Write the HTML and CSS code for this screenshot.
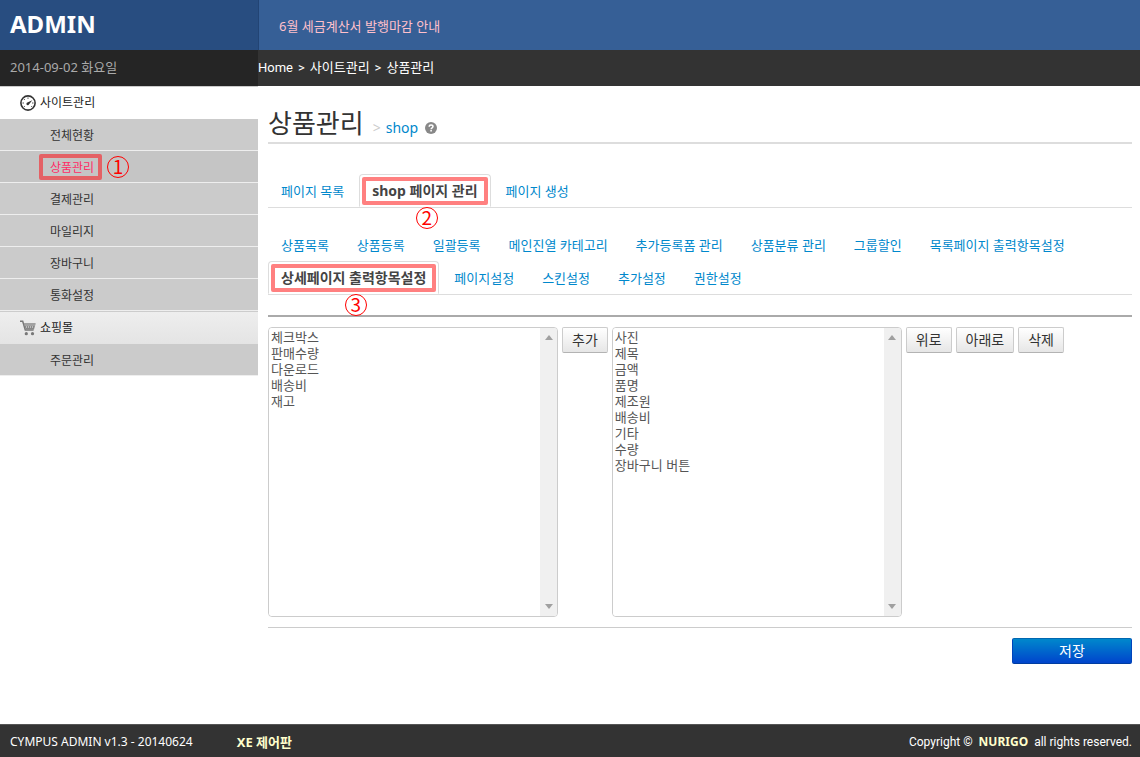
FILE: index.html
```html
<!DOCTYPE html>
<html lang="ko">
<head>
<meta charset="utf-8">
<title>ADMIN</title>
<link rel="stylesheet" href="styles.css">
</head>
<body>
<header class="top">
  <h1 class="brand">ADMIN</h1>
  <a class="notice" href="#">6월 세금계산서 발행마감 안내</a>
</header>
<div class="subbar">
  <div class="date">2014-09-02 화요일</div>
  <nav class="crumbs" aria-label="현재 위치"><a href="#">Home</a><span>&gt;</span><a href="#">사이트관리</a><span>&gt;</span><a href="#">상품관리</a></nav>
</div>
<div class="body">
  <nav class="side">
    <h2 class="side-head">
      <svg class="side-icon" viewBox="0 0 16 16" aria-hidden="true"><circle cx="8" cy="8" r="7.1" fill="#fff" stroke="#333" stroke-width="1.6"/><path d="M8 2.4v1.5M3.9 4l1 1M2.5 8H4M3.9 12l.9-.9M12.1 12l-.9-.9M13.5 8H12" stroke="#555" fill="none"/><path d="M12.3 5.2 8.9 9.4a1.3 1.3 0 1 1-1.5-1.8z" fill="#333"/></svg>
      사이트관리
    </h2>
    <ul class="side-list">
      <li><a href="#">전체현황</a></li>
      <li class="current"><a href="#">상품관리<span class="mark mark-side"></span></a><span class="step step-side">1</span></li>
      <li><a href="#">결제관리</a></li>
      <li><a href="#">마일리지</a></li>
      <li><a href="#">장바구니</a></li>
      <li><a href="#">통화설정</a></li>
    </ul>
    <h2 class="side-head side-head-alt">
      <svg class="side-icon" viewBox="0 0 16 16" aria-hidden="true"><path d="M0 1.2h2.7l2.6 8.9h8.3" fill="none" stroke="#777" stroke-width="1.5"/><path d="M4 3.2h11.7L14 9.4H5.6z" fill="#888"/><path d="M5.5 5h9M6 7h8" stroke="#eee" stroke-width="1" stroke-dasharray="1 1"/><circle cx="6.3" cy="13.7" r="1.6" fill="#777"/><circle cx="12.5" cy="13.7" r="1.6" fill="#777"/></svg>
      쇼핑몰
    </h2>
    <ul class="side-list">
      <li><a href="#">주문관리</a></li>
    </ul>
  </nav>
  <main class="main">
    <div class="title">
      <h2>상품관리</h2><span class="sep">&gt;</span><a href="#">shop</a>
      <svg class="help" viewBox="0 0 12 12" role="img" aria-label="도움말"><circle cx="6" cy="6" r="6" fill="#888"/><path d="M4.2 4.7C4.2 2.4 8 2.5 8 4.6 8 6 6.1 5.8 6.1 7.3" fill="none" stroke="#fff" stroke-width="1.5"/><path d="M5.3 8.1h1.6v1.5H5.3z" fill="#fff"/></svg>
    </div>
    <ul class="tabs">
      <li><a href="#">페이지 목록</a></li>
      <li class="active"><a href="#">shop 페이지 관리</a><span class="mark"></span><span class="step step-tab">2</span></li>
      <li><a href="#">페이지 생성</a></li>
    </ul>
    <ul class="tabs">
      <li><a href="#">상품목록</a></li>
      <li><a href="#">상품등록</a></li>
      <li><a href="#">일괄등록</a></li>
      <li><a href="#">메인진열 카테고리</a></li>
      <li><a href="#">추가등록폼 관리</a></li>
      <li><a href="#">상품분류 관리</a></li>
      <li><a href="#">그룹할인</a></li>
      <li><a href="#">목록페이지 출력항목설정</a></li>
      <li class="active"><a href="#">상세페이지 출력항목설정</a><span class="mark"></span><span class="step step-tab">3</span></li>
      <li><a href="#">페이지설정</a></li>
      <li><a href="#">스킨설정</a></li>
      <li><a href="#">추가설정</a></li>
      <li><a href="#">권한설정</a></li>
    </ul>
    <form class="form">
      <div class="pickers">
        <div class="listbox">
          <select multiple size="18" aria-label="추가할 항목">
            <option>체크박스</option><option>판매수량</option><option>다운로드</option><option>배송비</option><option>재고</option>
          </select>
          <div class="bar" aria-hidden="true"><i class="up"></i><i class="down"></i></div>
        </div>
        <button class="btn" type="button">추가</button>
        <div class="listbox">
          <select multiple size="18" aria-label="출력 항목">
            <option>사진</option><option>제목</option><option>금액</option><option>품명</option><option>제조원</option><option>배송비</option><option>기타</option><option>수량</option><option>장바구니 버튼</option>
          </select>
          <div class="bar" aria-hidden="true"><i class="up"></i><i class="down"></i></div>
        </div>
        <button class="btn" type="button">위로</button>
        <button class="btn" type="button">아래로</button>
        <button class="btn" type="button">삭제</button>
      </div>
      <div class="actions"><button class="save" type="submit">저장</button></div>
    </form>
  </main>
</div>
<footer class="foot">
  <span>CYMPUS ADMIN v1.3 - 20140624</span>
  <a href="#">XE 제어판</a>
  <span class="copy">Copyright © <a href="#">NURIGO</a> all rights reserved.</span>
</footer>
</body>
</html>
```
FILE: styles.css
```css
* { box-sizing: border-box; }
body {
  margin: 0;
  min-height: 100vh;
  display: flex;
  flex-direction: column;
  background: #fff;
  color: #333;
  font: 13px/20px "Noto Sans", "Noto Sans CJK KR", sans-serif;
}
a { color: inherit; text-decoration: none; }
h1, h2, ul { margin: 0; padding: 0; font-weight: 400; }
ul { list-style: none; }

.top { display: flex; height: 50px; background: #365f96; }
.brand {
  width: 259px;
  padding-left: 10px;
  border-right: 1px solid #224474;
  background: #284d80;
  color: #fff;
  font-size: 24px;
  line-height: 48px;
  font-weight: 700;
}
.notice { padding-left: 20px; line-height: 52px; color: #ffc0cb; }

.subbar { display: flex; height: 36px; background: #333; line-height: 35px; }
.date { width: 258px; padding-left: 10px; background: #252525; color: #aaa; }
.crumbs { display: flex; gap: 5px; color: #fff; font-family: Roboto, "Noto Sans CJK KR", sans-serif; }

.body { display: flex; flex: 1; }
.side { width: 258px; flex: none; border-top: 1px solid #ccc; font-size: 12px; }
.side-head {
  display: flex;
  align-items: center;
  gap: 4px;
  height: 32px;
  padding-left: 20px;
  font-size: 12px;
  color: #222;
}
.side-head-alt {
  height: 33px;
  border-top: 1px solid #ccc;
  background: linear-gradient(#eee, #e4e4e4);
}
.side-icon { width: 16px; height: 16px; }
.side-list li {
  position: relative;
  height: 32px;
  padding-left: 50px;
  border-bottom: 1px solid #eee;
  background: #cbcbcb;
  line-height: 33px;
}
.side-list .current { background: #c5c5c5; color: #ff2b66; }
.side-list a { position: relative; display: inline-block; }

.main { flex: 1; min-width: 0; padding: 14px 8px 0 10px; }
.title {
  display: flex;
  align-items: baseline;
  height: 44px;
  border-bottom: 2px solid #ddd;
  margin-bottom: 30px;
}
.title h2 { font-size: 26px; line-height: 46px; color: #333; }
.title .sep { margin: 0 5px 0 9px; color: #ccc; font-size: 14px; }
.title a { color: #0088cc; font-size: 14px; }
.help { width: 12px; height: 12px; margin: 14px 0 0 7px; align-self: center; }

.tabs { display: flex; flex-wrap: wrap; border-bottom: 1px solid #ddd; margin-bottom: 20px; }
.tabs li { position: relative; height: 33px; margin-right: 2px; border: 1px solid transparent; }
.tabs a { display: block; padding: 6px 12px; color: #0088cc; }
.tabs .active { margin-bottom: -1px; border-color: #ddd #ddd #fff; border-radius: 4px 4px 0 0; background: #fff; }
.tabs .active a { color: #444; font-size: 14px; font-weight: 700; }

.mark { position: absolute; inset: 2px 2px 1px; border: 4px solid #ff8080; border-radius: 2px; pointer-events: none; }
.mark-side { inset: 3px -8px 4px -11px; border-color: #e46165; }
.step {
  position: absolute;
  width: 22px;
  height: 22px;
  border: 1px solid #f00;
  border-radius: 50%;
  color: #f00;
  font: 400 19px/18px "Noto Sans CJK KR", sans-serif;
  text-align: center;
}
.step-side { left: 107px; top: 5px; }
.step-tab { left: 50%; top: 32px; margin-left: -9px; }

.form { border-top: 2px solid #aaa; padding-top: 10px; }
.pickers { display: flex; align-items: flex-start; gap: 4px; padding-bottom: 10px; border-bottom: 1px solid #ccc; }
.listbox {
  display: flex;
  flex: 0 1 290px;
  height: 290px;
  overflow: hidden;
  border: 1px solid #ccc;
  border-radius: 4px;
}
.listbox select {
  flex: 1;
  min-width: 0;
  height: 100%;
  padding: 0;
  border: 0;
  outline: 0;
  overflow: hidden;
  background: #fff;
  color: #555;
  font: 13px/16px "Noto Sans CJK KR", sans-serif;
}
.listbox option { display: flex; align-items: center; height: 16px; min-height: 16px; padding: 0 2px; }
.bar { display: flex; flex-direction: column; justify-content: space-between; align-items: center; width: 17px; padding: 7px 0; background: #f0f0f0; }
.bar i { border: 4px solid transparent; }
.bar .up { border-top: 0; border-bottom: 5px solid #a0a0a0; }
.bar .down { border-bottom: 0; border-top: 5px solid #a0a0a0; }
.btn {
  height: 26px;
  padding: 0 9px;
  border: 1px solid #ccc;
  border-bottom-color: #b3b3b3;
  border-radius: 2px;
  background: linear-gradient(#fff, #e6e6e6);
  color: #333;
  font: 14px/22px "Noto Sans", "Noto Sans CJK KR", sans-serif;
  white-space: nowrap;
}
.actions { display: flex; justify-content: flex-end; padding-top: 10px; }
.save {
  width: 120px;
  height: 26px;
  padding: 0;
  border: 1px solid #04b;
  border-color: #0067b0 #04b #003da0;
  border-radius: 2px;
  background: linear-gradient(#0088cc, #0044cc);
  color: #fff;
  font: 14px/22px "Noto Sans", "Noto Sans CJK KR", sans-serif;
}

.foot {
  display: flex;
  height: 33px;
  padding: 0 8px 0 10px;
  border-top: 1px solid #555;
  background: #333;
  color: #fff;
  font-size: 12px;
  line-height: 34px;
}
.foot a { color: #ffffcc; font-weight: 700; }
.foot > a { margin-left: 44px; font-size: 13px; }
.copy { margin-left: auto; font-family: Roboto, sans-serif; }
.copy a { margin: 0 3px; font-family: "Noto Sans", sans-serif; }
```
